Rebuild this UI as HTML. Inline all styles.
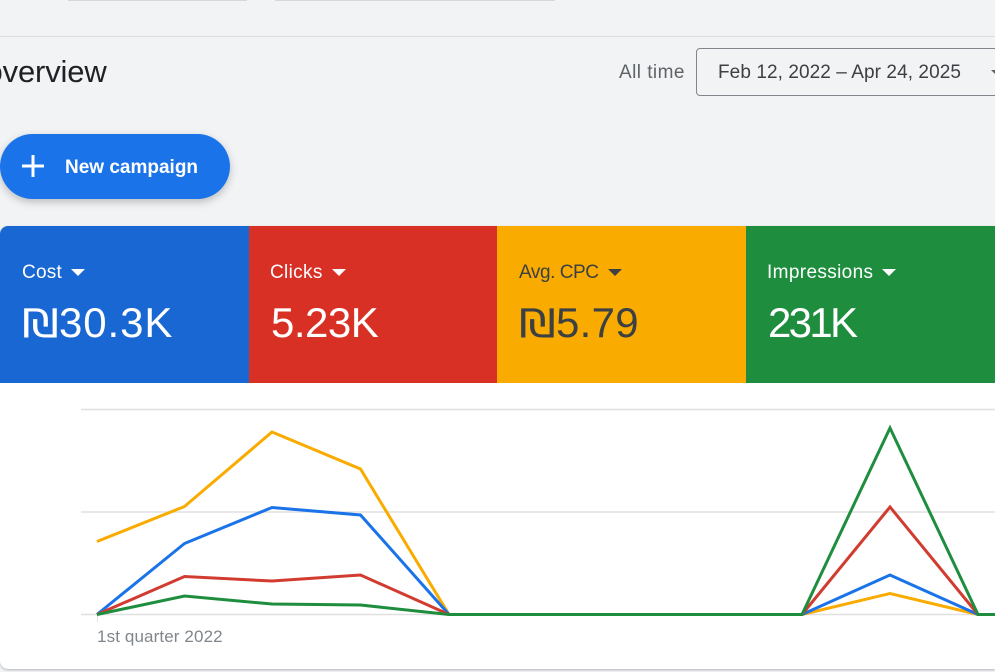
<!DOCTYPE html>
<html><head><meta charset="utf-8">
<style>
html,body{margin:0;padding:0;width:995px;height:672px;overflow:hidden;background:#f1f3f5;font-family:"Liberation Sans",sans-serif}
.a{position:absolute;white-space:nowrap}
.card{position:absolute;top:226px;height:157px}
.lab{position:absolute;top:37px;font-size:19px;line-height:20px;left:22px;color:#fff}
.lab i{display:inline-block;width:0;height:0;border-left:7px solid transparent;border-right:7px solid transparent;border-top:7px solid currentColor;margin-left:9px;vertical-align:2px}
.val{position:absolute;top:73px;left:22px;font-size:42px;line-height:48px;color:#fff}
.s{font-family:"DejaVu Sans",sans-serif;font-size:39px;display:inline-block;width:37px;transform:scaleX(1.2);transform-origin:0 50%;letter-spacing:0}
</style></head><body>
<div class="a" style="left:68px;top:0;width:179px;height:1px;background:#d5d7da"></div>
<div class="a" style="left:275px;top:0;width:280px;height:1px;background:#d5d7da"></div>
<div class="a" style="left:0;top:36px;width:995px;height:1px;background:#dadce0"></div>
<div class="a" style="left:-14.5px;top:55px;font-size:31px;line-height:34px;letter-spacing:-.15px;color:#202124">overview</div>
<div class="a" style="left:619px;top:62px;font-size:19px;line-height:22px;letter-spacing:.45px;color:#5f6368">All time</div>
<div class="a" style="left:696px;top:48px;width:320px;height:46px;border:1px solid #80868b;border-radius:4px"></div>
<div class="a" style="left:718px;top:62px;font-size:19px;line-height:22px;letter-spacing:.08px;color:#3c4043">Feb 12, 2022 – Apr 24, 2025</div>
<div class="a" style="left:991px;top:70px;width:0;height:0;border-left:5px solid transparent;border-right:5px solid transparent;border-top:5px solid #5f6368"></div>
<div class="a" style="left:0;top:134px;width:230px;height:65px;background:#1a73e8;border-radius:33px;box-shadow:0 3px 8px rgba(60,64,67,.3)"></div>
<svg class="a" style="left:21px;top:154px" width="24" height="24"><path d="M12 1V23M1 12H23" stroke="#fff" stroke-width="3"/></svg>
<div class="a" style="left:65px;top:156.5px;font-size:19px;line-height:22px;font-weight:bold;color:#fff">New campaign</div>
<div class="a" style="left:0;top:226px;width:995px;height:443px;background:#fff;border-radius:8px 0 0 8px;box-shadow:0 1px 2px rgba(60,64,67,.35)"></div>
<div class="card" style="left:0;width:249px;background:#1967d2;border-top-left-radius:8px"><div class="lab" style="letter-spacing:.25px">Cost<i></i></div><div class="val" style="letter-spacing:.9px"><span class="s">₪</span>30.3K</div></div>
<div class="card" style="left:249px;width:248px;background:#d93025"><div class="lab" style="left:21px;letter-spacing:.33px">Clicks<i></i></div><div class="val" style="letter-spacing:-.5px">5.23K</div></div>
<div class="card" style="left:497px;width:249px;background:#f9ab00"><div class="lab" style="color:#3c4043;letter-spacing:-.44px">Avg. CPC<i></i></div><div class="val" style="color:#3c4043;letter-spacing:.3px"><span class="s">₪</span>5.79</div></div>
<div class="card" style="left:746px;width:249px;background:#1e8e3e"><div class="lab" style="left:21px;letter-spacing:.36px">Impressions<i></i></div><div class="val" style="letter-spacing:-2.7px">231K</div></div>
<svg class="a" style="left:0;top:0" width="995" height="672" fill="none">
<path d="M81 409.5H995M81 512H995M81 614.5H995" stroke="#e0e0e0" stroke-width="1.4"/>
<path d="M97.5 615V622" stroke="#e0e0e0"/>
<g stroke-width="3" stroke-linejoin="miter">
<path stroke="#f9ab00" d="M97 541.5L184.5 506.5L272 432L360.5 469L449 614.5H802L890 593.5L978 614.5H995"/>
<path stroke="#1a73e8" d="M97 614.5L184.5 543.5L272 507.5L360.5 515L449 614.5H802L890 575L978 614.5H995"/>
<path stroke="#d13b30" d="M97 614.5L184.5 576.5L272 581L360.5 575L449 614.5H802L890 507L978 614.5H995"/>
<path stroke="#1e8e3e" d="M97 614.5L184.5 596L272 604L360.5 605L449 614.5H802L890 428L978 614.5H995"/>
</g></svg>
<div class="a" style="left:97px;top:628px;font-size:17px;line-height:18px;letter-spacing:.12px;color:#80868b">1st quarter 2022</div>
</body></html>
